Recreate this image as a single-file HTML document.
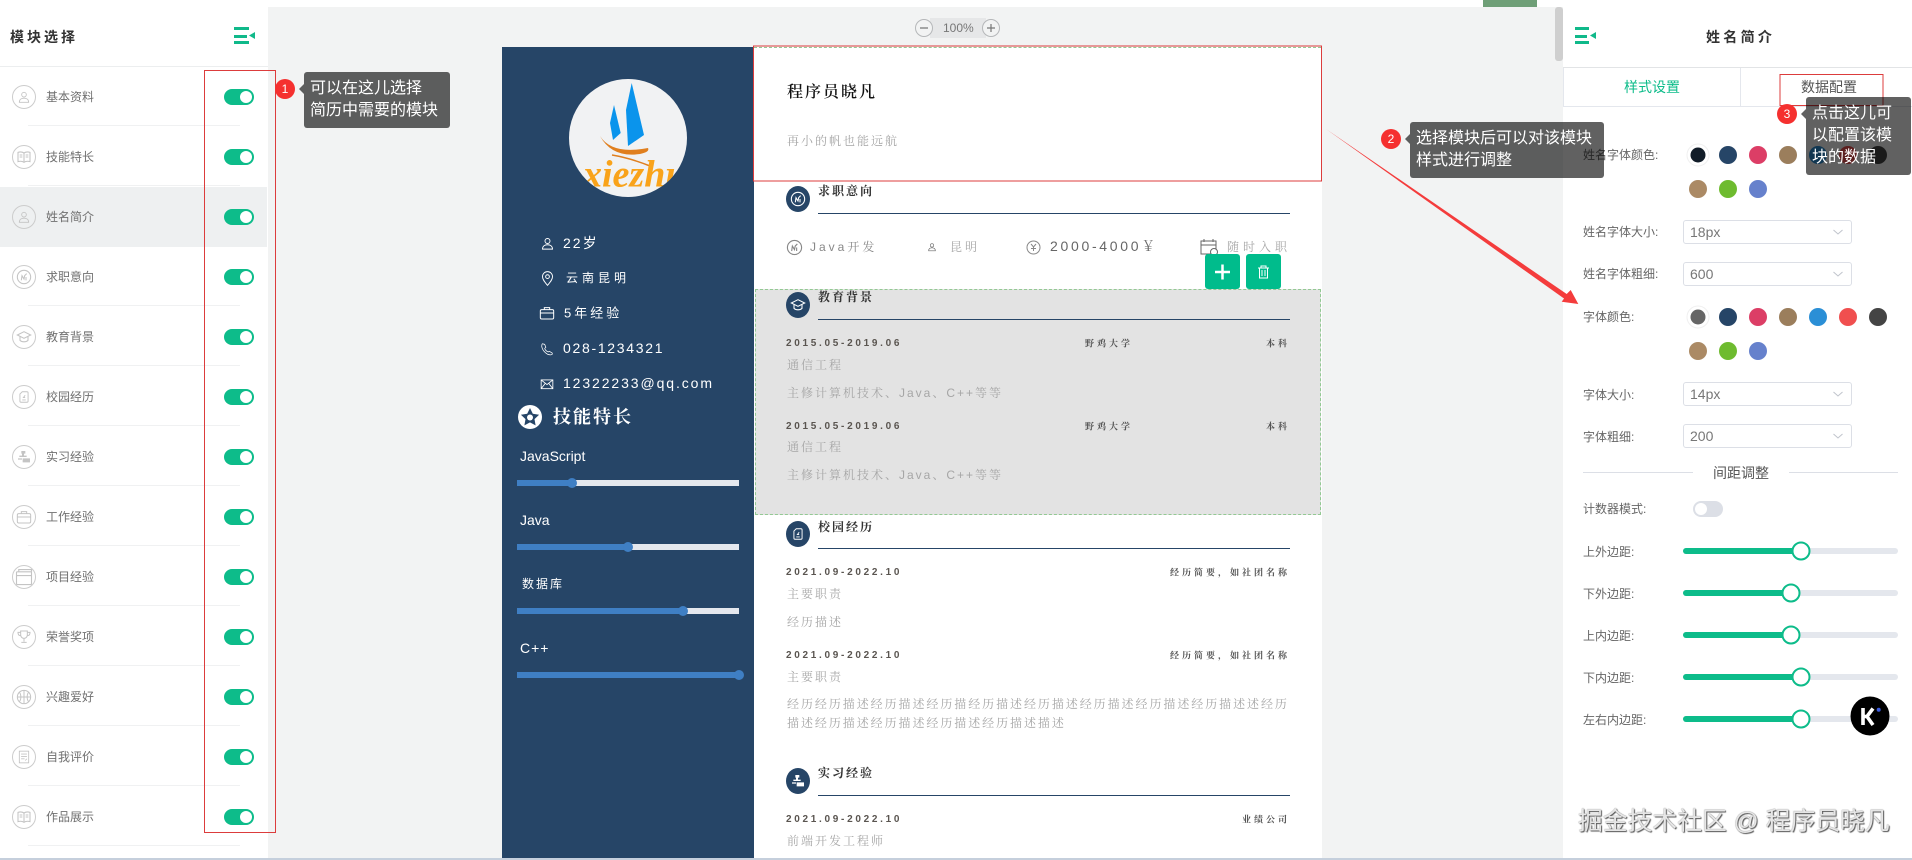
<!DOCTYPE html>
<html lang="zh-CN"><head><meta charset="utf-8"><title>简历编辑器</title>
<style>
html,body{margin:0;padding:0;width:1912px;height:860px;overflow:hidden;background:#fff}
body{position:relative;font-family:"Liberation Sans","Noto Sans CJK SC",sans-serif;color:#666}
.a{position:absolute}
.t{position:absolute;white-space:nowrap;line-height:1;transform:translateY(-50%)}
svg.l{position:absolute;left:0;top:0}
.m{font-size:12px;color:#707070;left:46px}
.r{font-family:"Liberation Sans","Noto Serif CJK SC",serif;font-size:12px;letter-spacing:2px;color:#a6a6a6;left:787px}
.h{font-family:"Liberation Sans","Noto Serif CJK SC",serif;font-size:12px;letter-spacing:2px;color:#333;font-weight:700;left:818px}
.d{font-size:10px;font-weight:700;letter-spacing:2.7px;color:#5a5550;left:786px}
.s{font-family:"Liberation Sans","Noto Serif CJK SC",serif;font-size:9px;font-weight:700;letter-spacing:3px;color:#555}
.i{color:#fff;font-size:14px;left:563px}
.c{font-size:12px;color:#666;left:1583px}
.sel{position:absolute;left:1683px;width:167px;height:22px;border:1px solid #dcdfe6;border-radius:3px;background:#fff;box-sizing:content-box}
.sel span{position:absolute;left:6px;top:3px;font-size:14px;line-height:16px;color:#777}
.tip{position:absolute;background:rgba(0,0,0,.62);border-radius:3px;color:#fff;font-size:16px;line-height:22px;box-sizing:border-box;white-space:nowrap}
.tip:before{content:"";position:absolute;left:-5px;top:12px;border:5px solid transparent;border-left:0;border-right-color:rgba(0,0,0,.62)}
.b{position:absolute;border-radius:50%;background:#f5302f;color:#fff;font-size:12px;text-align:center}
</style></head><body>

<!-- backgrounds -->
<div class="a" style="left:268px;top:7px;width:1295px;height:851px;background:#f2f3f3"></div>
<div class="a" style="left:1483px;top:0;width:54px;height:7px;background:#6f9f77"></div>
<div class="a" style="left:1555px;top:7px;width:8px;height:54px;background:#cfcfcf;border-radius:3px"></div>
<div class="a" style="left:0;top:66px;width:268px;height:1px;background:#eceeef"></div>
<div class="a" style="left:0;top:187px;width:267px;height:60px;background:#eef0f1"></div>
<div class="a" style="left:502px;top:47px;width:252px;height:811px;background:#264567"></div>
<div class="a" style="left:754px;top:47px;width:568px;height:811px;background:#fff"></div>
<div class="a" style="left:755px;top:289px;width:566px;height:226px;background:#e3e3e3;border:1px dashed #93c993;box-sizing:border-box"></div>
<div class="a" style="left:754px;top:47px;width:567px;height:134px;border-top:1px dashed #93c993;box-sizing:border-box"></div>
<div class="a" style="left:930px;top:18px;width:56px;height:20px;background:#e6e7e8"></div>
<div class="a" style="left:1563px;top:67px;width:349px;height:1px;background:#e2e4e6"></div>
<div class="a" style="left:1563px;top:106px;width:349px;height:1px;background:#e4e7ed"></div>
<div class="a" style="left:1740px;top:68px;width:1px;height:38px;background:#e4e7ed"></div>
<div class="a" style="left:1563px;top:68px;width:1px;height:38px;background:#e4e7ed"></div>
<div class="a" style="left:0;top:858px;width:1912px;height:2px;background:#c5cfdc"></div>

<svg class="l" width="1912" height="860" viewBox="0 0 1912 860">
<defs>
<symbol id="u" viewBox="0 0 24 24"><g fill="none" stroke="currentColor" stroke-width="1.5"><circle cx="12" cy="8" r="4"/><path d="M4 21c0-5 4-7 8-7s8 2 8 7z"/></g></symbol>
<symbol id="bk" viewBox="0 0 24 24"><g fill="none" stroke="currentColor" stroke-width="1.6"><path d="M12 6C9 4 6 4 3 5v14c3-1 6-1 9 1 3-2 6-2 9-1V5c-3-1-6-1-9 1zM12 6v14M5.500 9h4M5.500 12h4M14.500 9h4M14.500 12h4"/></g></symbol>
<symbol id="ch" viewBox="0 0 24 24"><g fill="none" stroke="currentColor" stroke-width="1.6"><circle cx="12" cy="12" r="10"/><path d="M8 17l1-7 3 5 1-5 3-3M15 12v5"/></g></symbol>
<symbol id="ca" viewBox="0 0 24 24"><g fill="none" stroke="currentColor" stroke-width="1.6"><path d="M12 4L2 9l10 5 10-5zM6 11.500V17c3 3 9 3 12 0v-5.500"/></g></symbol>
<symbol id="dc" viewBox="0 0 24 24"><g fill="none" stroke="currentColor" stroke-width="1.6"><path d="M9 3h8a2 2 0 0 1 2 2v14a2 2 0 0 1-2 2H7a2 2 0 0 1-2-2V7zM9 17h6M14 9l-3 4h3"/></g></symbol>
<symbol id="st" viewBox="0 0 24 24"><path fill="currentColor" d="M8 3h6v4h-2v3h4v2H5v-2h4V7H8zM10 14h11v6H10zM3 14h6v2H3z"/></symbol>
<symbol id="br" viewBox="0 0 24 24"><g fill="none" stroke="currentColor" stroke-width="1.500"><rect x="2" y="7" width="20" height="14" rx="2"/><path d="M8 7V4h8v3M2 12h20"/></g></symbol>
<symbol id="wi" viewBox="0 0 24 24"><g fill="none" stroke="currentColor" stroke-width="1.500"><rect x="2" y="5" width="20" height="17" rx="1"/><path d="M2 10h20M5 5V2h17v3"/></g></symbol>
<symbol id="tr" viewBox="0 0 24 24"><g fill="none" stroke="currentColor" stroke-width="1.500"><path d="M7 3h10v6a5 5 0 0 1-10 0zM7 5H3c0 4 2 5 4 5M17 5h4c0 4-2 5-4 5M12 14v5M8 20h8"/></g></symbol>
<symbol id="ba" viewBox="0 0 24 24"><g fill="none" stroke="currentColor" stroke-width="1.500"><circle cx="12" cy="12" r="10"/><path d="M2 12h20M12 2v20M5 5c3 3 3 11 0 14M19 5c-3 3-3 11 0 14"/></g></symbol>
<symbol id="no" viewBox="0 0 24 24"><g fill="none" stroke="currentColor" stroke-width="1.500"><rect x="4" y="2" width="16" height="20"/><path d="M7 7h10M7 11h10M7 15h6M14 18l3-3"/></g></symbol>
<symbol id="pi" viewBox="0 0 24 24"><g fill="none" stroke="currentColor" stroke-width="1.500"><path d="M12 23C8 18 4 14 4 9a8 8 0 0 1 16 0c0 5-4 9-8 14z"/><circle cx="12" cy="9" r="3"/></g></symbol>
<symbol id="ph" viewBox="0 0 24 24"><g fill="none" stroke="currentColor" stroke-width="1.300"><path d="M4 3l4 1 2 5-2 2c1 3 3 5 6 6l2-1 5 3 0 2c-2 2-5 1-8 0-5-3-9-8-10-13 0-2 0-4 1-5z"/></g></symbol>
<symbol id="ma" viewBox="0 0 24 24"><g fill="none" stroke="currentColor" stroke-width="1.500"><rect x="2" y="5" width="20" height="15"/><path d="M2 5l10 8 10-8M2 20l7-9M22 20l-7-9"/></g></symbol>
<clipPath id="av"><circle cx="628" cy="138" r="59"/></clipPath>
</defs>

<!-- module icons -->
<g fill="none" stroke="#ccc" stroke-width="1">
<circle cx="24" cy="97" r="11.5"/><circle cx="24" cy="157" r="11.5"/><circle cx="24" cy="217" r="11.5"/><circle cx="24" cy="277" r="11.5"/><circle cx="24" cy="337" r="11.5"/><circle cx="24" cy="397" r="11.5"/><circle cx="24" cy="457" r="11.5"/><circle cx="24" cy="517" r="11.5"/><circle cx="24" cy="577" r="11.5"/><circle cx="24" cy="637" r="11.5"/><circle cx="24" cy="697" r="11.5"/><circle cx="24" cy="757" r="11.5"/><circle cx="24" cy="817" r="11.5"/>
</g>
<g style="color:#c4c4c4">
<use href="#u" x="17" y="90" width="14" height="14"/><use href="#bk" x="16" y="149" width="16" height="16"/><use href="#u" x="17" y="210" width="14" height="14"/><use href="#ch" x="16" y="269" width="16" height="16"/><use href="#ca" x="16" y="329" width="16" height="16"/><use href="#dc" x="17" y="390" width="14" height="14"/><use href="#st" x="16" y="449" width="16" height="16"/><use href="#br" x="16" y="509" width="16" height="16"/><use href="#wi" x="15" y="568" width="18" height="18"/><use href="#tr" x="16" y="629" width="16" height="16"/><use href="#ba" x="16" y="689" width="16" height="16"/><use href="#no" x="17" y="750" width="14" height="14"/><use href="#bk" x="16" y="809" width="16" height="16"/>
</g>
<!-- separators -->
<g stroke="#f0f1f2" stroke-width="1">
<path d="M28 125.500H240M28 185.500H240M28 305.500H240M28 365.500H240M28 425.500H240M28 485.500H240M28 545.500H240M28 605.500H240M28 665.500H240M28 725.500H240M28 785.500H240M28 845.500H240"/>
</g>
<!-- switches -->
<g fill="#0dbc8a">
<rect x="224" y="89" width="30" height="16" rx="8"/><rect x="224" y="149" width="30" height="16" rx="8"/><rect x="224" y="209" width="30" height="16" rx="8"/><rect x="224" y="269" width="30" height="16" rx="8"/><rect x="224" y="329" width="30" height="16" rx="8"/><rect x="224" y="389" width="30" height="16" rx="8"/><rect x="224" y="449" width="30" height="16" rx="8"/><rect x="224" y="509" width="30" height="16" rx="8"/><rect x="224" y="569" width="30" height="16" rx="8"/><rect x="224" y="629" width="30" height="16" rx="8"/><rect x="224" y="689" width="30" height="16" rx="8"/><rect x="224" y="749" width="30" height="16" rx="8"/><rect x="224" y="809" width="30" height="16" rx="8"/>
</g>
<g fill="#fff">
<circle cx="246" cy="97" r="6"/><circle cx="246" cy="157" r="6"/><circle cx="246" cy="217" r="6"/><circle cx="246" cy="277" r="6"/><circle cx="246" cy="337" r="6"/><circle cx="246" cy="397" r="6"/><circle cx="246" cy="457" r="6"/><circle cx="246" cy="517" r="6"/><circle cx="246" cy="577" r="6"/><circle cx="246" cy="637" r="6"/><circle cx="246" cy="697" r="6"/><circle cx="246" cy="757" r="6"/><circle cx="246" cy="817" r="6"/>
</g>
<!-- menu icons -->
<g fill="#10b98a">
<rect x="234" y="27" width="15" height="3"/><rect x="234" y="35" width="13" height="3"/><rect x="234" y="41" width="15" height="3"/><path d="M255 32v7l-6-3.500z"/>
<rect x="1575" y="27" width="14" height="3"/><rect x="1575" y="35" width="12" height="3"/><rect x="1575" y="41" width="14" height="3"/><path d="M1596 32v7l-6-3.500z"/>
</g>
<!-- zoom controls -->
<g fill="#f2f3f3" stroke="#b5b7b9"><circle cx="924" cy="28" r="8.500"/><circle cx="991" cy="28" r="8.500"/></g>
<path d="M920 28h8M987 28h8M991 24v8" stroke="#777" stroke-width="1.200"/>

<!-- avatar -->
<circle cx="628" cy="138" r="59" fill="#f1f2f3"/>
<g clip-path="url(#av)">
<path d="M631.700 83L644 135 628 146 626 110z" fill="#0a94ec"/>
<path d="M614 105L620.700 133 613 140 610 123z" fill="#0a94ec"/>
<path d="M600 136Q612 155 648 148 650 152 640 154 612 158 600 136z" fill="#e07f1e"/>
<path d="M612 155Q630 158 650 166" stroke="#e07f1e" stroke-width="1.500" fill="none"/>
<text x="583" y="186.500" font-family="Liberation Serif,serif" font-weight="700" font-style="italic" font-size="38" fill="#f9a31a">xiezhu</text>
</g>
<!-- sidebar icons -->
<g style="color:#fff">
<use href="#u" x="540" y="236" width="15" height="15"/><use href="#pi" x="540" y="271" width="15" height="15"/><use href="#br" x="539" y="305" width="16" height="16"/><use href="#ph" x="540" y="342" width="14" height="14"/><use href="#ma" x="540" y="377" width="14" height="14"/>
</g>
<circle cx="530" cy="417" r="12" fill="#fff"/>
<path d="M530 408l2.800 5.800 6.300.900-4.600 4.400 1.100 6.300-5.600-3-5.600 3 1.100-6.300-4.600-4.400 6.300-.900z" fill="#264567"/>
<circle cx="530" cy="417.500" r="3" fill="#fff"/>
<!-- skill bars -->
<g fill="#e4e7ed"><rect x="517" y="480" width="222" height="6"/><rect x="517" y="544" width="222" height="6"/><rect x="517" y="608" width="222" height="6"/></g>
<g fill="#3f7fc4">
<rect x="517" y="480" width="55" height="6"/><circle cx="572" cy="483" r="5"/>
<rect x="517" y="544" width="111" height="6"/><circle cx="628" cy="547" r="5"/>
<rect x="517" y="608" width="166" height="6"/><circle cx="683" cy="611" r="5"/>
<rect x="517" y="672" width="222" height="6"/><circle cx="739" cy="675" r="5"/>
</g>

<!-- resume section icons -->
<g fill="#264567">
<ellipse cx="798" cy="199" rx="12" ry="13"/><ellipse cx="798" cy="305" rx="12" ry="13"/><ellipse cx="798" cy="534" rx="12" ry="13"/><ellipse cx="798" cy="781" rx="12" ry="13"/>
</g>
<g style="color:#fff">
<use href="#ch" x="790" y="191" width="16" height="16"/><use href="#ca" x="790" y="297" width="16" height="16"/><use href="#dc" x="791" y="527" width="14" height="14"/><use href="#st" x="790" y="773" width="16" height="16"/>
</g>
<g stroke="#264567" stroke-width="1">
<path d="M818 213.500H1290M818 319.500H1290M818 548.500H1290M818 795.500H1290"/>
</g>
<!-- job row icons -->
<g style="color:#888">
<use href="#ch" x="786" y="239" width="17" height="17"/>
<use href="#u" x="927" y="240" width="10" height="14" style="color:#666"/>
<circle cx="1033.500" cy="247.500" r="6.500" fill="none" stroke="#888"/>
<path d="M1031 244l2.500 3 2.500-3M1033.500 247v4M1031 248.500h5" stroke="#888" fill="none"/>
<rect x="1201" y="241" width="15" height="13" fill="none" stroke="#666"/>
<path d="M1201 245h15M1204 239v3M1213 239v3" stroke="#666" fill="none"/>
<circle cx="1214" cy="252" r="3.500" fill="#fff" stroke="#666"/>
</g>
<!-- buttons -->
<rect x="1205" y="254" width="35" height="35" rx="3" fill="#00bc8c"/>
<rect x="1246" y="254" width="35" height="35" rx="3" fill="#00bc8c"/>
<path d="M1215 272h15M1222.500 264.500v15" stroke="#fff" stroke-width="2.500"/>
<path d="M1258 268h11M1261 268v-2h5v2M1259.500 268v10h8v-10M1262 270v6M1265 270v6" stroke="#fff" fill="none"/>

<!-- colour dots -->
<g>
<circle cx="1698" cy="155" r="11" fill="#fff" stroke="#f0f0f0"/><circle cx="1698" cy="155" r="7.500" fill="#111c28"/>
<circle cx="1728" cy="155" r="9" fill="#264567"/><circle cx="1758" cy="155" r="9" fill="#dc3e66"/><circle cx="1788" cy="155" r="9" fill="#9b7e5c"/><circle cx="1818" cy="155" r="9" fill="#2b8fd6"/><circle cx="1848" cy="155" r="9" fill="#f04f4f"/><circle cx="1878" cy="155" r="9" fill="#444"/>
<circle cx="1698" cy="189" r="9" fill="#ab8a65"/><circle cx="1728" cy="189" r="9" fill="#6ebb2f"/><circle cx="1758" cy="189" r="9" fill="#6681cc"/>
<circle cx="1698" cy="317" r="11" fill="#fff" stroke="#f0f0f0"/><circle cx="1698" cy="317" r="7.500" fill="#666"/>
<circle cx="1728" cy="317" r="9" fill="#264567"/><circle cx="1758" cy="317" r="9" fill="#dc3e66"/><circle cx="1788" cy="317" r="9" fill="#9b7e5c"/><circle cx="1818" cy="317" r="9" fill="#2b8fd6"/><circle cx="1848" cy="317" r="9" fill="#f04f4f"/><circle cx="1878" cy="317" r="9" fill="#444"/>
<circle cx="1698" cy="351" r="9" fill="#ab8a65"/><circle cx="1728" cy="351" r="9" fill="#6ebb2f"/><circle cx="1758" cy="351" r="9" fill="#6681cc"/>
</g>
<!-- divider -->
<path d="M1583 472.500H1693M1789 472.500H1898" stroke="#dcdfe6"/>
<!-- off switch -->
<rect x="1693" y="501" width="30" height="16" rx="8" fill="#dcdfe6"/><circle cx="1701" cy="509" r="6" fill="#fff"/>
<!-- sliders -->
<g fill="#e4e7ed"><rect x="1683" y="548" width="215" height="6" rx="3"/><rect x="1683" y="590" width="215" height="6" rx="3"/><rect x="1683" y="632" width="215" height="6" rx="3"/><rect x="1683" y="674" width="215" height="6" rx="3"/><rect x="1683" y="716" width="215" height="6" rx="3"/></g>
<g fill="#0dbc8a"><rect x="1683" y="548" width="118" height="6" rx="3"/><rect x="1683" y="590" width="108" height="6" rx="3"/><rect x="1683" y="632" width="108" height="6" rx="3"/><rect x="1683" y="674" width="118" height="6" rx="3"/><rect x="1683" y="716" width="118" height="6" rx="3"/></g>
<g fill="#fff" stroke="#0dbc8a" stroke-width="2"><circle cx="1801" cy="551" r="8.500"/><circle cx="1791" cy="593" r="8.500"/><circle cx="1791" cy="635" r="8.500"/><circle cx="1801" cy="677" r="8.500"/><circle cx="1801" cy="719" r="8.500"/></g>
<circle cx="1870" cy="716" r="19.500" fill="#000"/>
<path d="M1863 708v17M1863 716.500h4l6-8M1867 716.500l6 8.500" stroke="#fff" stroke-width="3.600" fill="none"/>
<circle cx="1878.700" cy="709.700" r="2" fill="#3b5bdb"/>
</svg>

<!-- left panel text -->
<div class="t" style="left:10px;top:37px;font-size:14px;font-weight:700;letter-spacing:3px;color:#333">模块选择</div>
<div class="t m" style="top:97px">基本资料</div>
<div class="t m" style="top:157px">技能特长</div>
<div class="t m" style="top:217px">姓名简介</div>
<div class="t m" style="top:277px">求职意向</div>
<div class="t m" style="top:337px">教育背景</div>
<div class="t m" style="top:397px">校园经历</div>
<div class="t m" style="top:457px">实习经验</div>
<div class="t m" style="top:517px">工作经验</div>
<div class="t m" style="top:577px">项目经验</div>
<div class="t m" style="top:637px">荣誉奖项</div>
<div class="t m" style="top:697px">兴趣爱好</div>
<div class="t m" style="top:757px">自我评价</div>
<div class="t m" style="top:817px">作品展示</div>

<!-- zoom -->
<div class="t" style="left:943px;top:28px;font-size:12px;color:#777">100%</div>

<!-- sidebar text -->
<div class="t i" style="top:243px;letter-spacing:2px">22岁</div>
<div class="t i" style="top:278px;left:566px;font-size:12px;letter-spacing:4px">云南昆明</div>
<div class="t i" style="top:313px;left:564px;font-size:13px;letter-spacing:3px">5年经验</div>
<div class="t i" style="top:348px;letter-spacing:1.700px">028-1234321</div>
<div class="t i" style="top:383px;letter-spacing:1.900px">12322233@qq.com</div>
<div class="t" style="left:553px;top:417px;font-size:18px;font-weight:700;letter-spacing:2px;color:#fff;font-family:'Liberation Sans','Noto Serif CJK SC',serif">技能特长</div>
<div class="t" style="left:520px;top:456px;font-size:14px;color:#fff">JavaScript</div>
<div class="t" style="left:520px;top:520px;font-size:14px;color:#fff">Java</div>
<div class="t" style="left:522px;top:584px;font-size:12px;letter-spacing:2px;color:#fff">数据库</div>
<div class="t" style="left:520px;top:648px;font-size:14px;letter-spacing:1px;color:#fff">C++</div>

<!-- resume main text -->
<div class="t" style="left:787px;top:93px;font-family:'Liberation Sans','Noto Serif CJK SC',serif;font-size:16px;font-weight:600;letter-spacing:2px;color:#111">程序员晓凡</div>
<div class="t r" style="top:141px">再小的帆也能远航</div>

<div class="t h" style="top:191px">求职意向</div>
<div class="t r" style="left:810px;top:247px;letter-spacing:3px;color:#888">Java开发</div>
<div class="t r" style="left:950px;top:247px;letter-spacing:3px">昆明</div>
<div class="t r" style="left:1050px;top:246px;font-size:14px;letter-spacing:2.700px;color:#666">2000-4000￥</div>
<div class="t r" style="left:1227px;top:247px;letter-spacing:4px">随时入职</div>

<div class="t h" style="top:297px">教育背景</div>
<div class="t d" style="top:344px">2015.05-2019.06</div>
<div class="t s" style="left:1085px;top:344px">野鸡大学</div>
<div class="t s" style="left:1266px;top:344px">本科</div>
<div class="t r" style="top:365px">通信工程</div>
<div class="t r" style="top:393px">主修计算机技术、Java、C++等等</div>
<div class="t d" style="top:427px">2015.05-2019.06</div>
<div class="t s" style="left:1085px;top:427px">野鸡大学</div>
<div class="t s" style="left:1266px;top:427px">本科</div>
<div class="t r" style="top:447px">通信工程</div>
<div class="t r" style="top:475px">主修计算机技术、Java、C++等等</div>

<div class="t h" style="top:527px">校园经历</div>
<div class="t d" style="top:573px">2021.09-2022.10</div>
<div class="t s" style="left:1170px;top:573px">经历简要，如社团名称</div>
<div class="t r" style="top:594px">主要职责</div>
<div class="t r" style="top:622px">经历描述</div>
<div class="t d" style="top:656px">2021.09-2022.10</div>
<div class="t s" style="left:1170px;top:656px">经历简要，如社团名称</div>
<div class="t r" style="top:677px">主要职责</div>
<div class="t r" style="top:704px;letter-spacing:1.940px">经历经历描述经历描述经历描经历描述经历描述经历描述经历描述经历描述述经历</div>
<div class="t r" style="top:723px;letter-spacing:1.940px">描述经历描述经历描述经历描述经历描述描述</div>

<div class="t h" style="top:773px">实习经验</div>
<div class="t d" style="top:820px">2021.09-2022.10</div>
<div class="t s" style="left:1242px;top:820px">业绩公司</div>
<div class="t r" style="top:841px">前端开发工程师</div>

<!-- right panel text -->
<div class="t" style="left:1706px;top:37px;font-size:14px;font-weight:700;letter-spacing:3.300px;color:#333">姓名简介</div>
<div class="t" style="left:1624px;top:87px;font-size:14px;color:#0dbc8a">样式设置</div>
<div class="t" style="left:1801px;top:87px;font-size:14px;color:#555">数据配置</div>
<div class="t c" style="top:155px">姓名字体颜色:</div>
<div class="t c" style="top:232px">姓名字体大小:</div>
<div class="sel" style="top:220px"><span>18px</span></div>
<div class="t c" style="top:274px">姓名字体粗细:</div>
<div class="sel" style="top:262px"><span>600</span></div>
<div class="t c" style="top:317px">字体颜色:</div>
<div class="t c" style="top:395px">字体大小:</div>
<div class="sel" style="top:382px"><span>14px</span></div>
<div class="t c" style="top:437px">字体粗细:</div>
<div class="sel" style="top:424px"><span>200</span></div>
<svg class="l" width="1912" height="860" viewBox="0 0 1912 860" style="pointer-events:none"><path d="M1833.500 230l4.500 4 4.500-4M1833.500 272l4.500 4 4.500-4M1833.500 392l4.500 4 4.500-4M1833.500 434l4.500 4 4.500-4" fill="none" stroke="#c0c4cc"/></svg>
<div class="t" style="left:1713px;top:473px;font-size:14px;color:#555">间距调整</div>
<div class="t c" style="top:509px">计数器模式:</div>
<div class="t c" style="top:552px">上外边距:</div>
<div class="t c" style="top:594px">下外边距:</div>
<div class="t c" style="top:636px">上内边距:</div>
<div class="t c" style="top:678px">下内边距:</div>
<div class="t c" style="top:720px">左右内边距:</div>
<div class="t" style="left:1578px;top:823px;font-size:24.800px;color:#e6e6e6;text-shadow:1px 1px 1px #555,0 0 1px #666">掘金技术社区 @ 程序员晓凡</div>

<!-- annotations -->
<svg class="l" width="1912" height="860" viewBox="0 0 1912 860">
<g fill="none" stroke="#dc3c3c" stroke-width="1">
<rect x="204.500" y="70.500" width="71" height="762"/>
<rect x="753.500" y="46" width="568" height="135"/>
<rect x="1780" y="74.500" width="103" height="31"/>
</g>
<path d="M1326 129L1566.700 294 1570.700 290 1578.300 304 1561.700 301.700 1564 298.500z" fill="#f43c3c"/>
</svg>
<div class="b" style="left:275px;top:79px;width:20px;height:20px;line-height:20px">1</div>
<div class="tip" style="left:304px;top:72px;width:146px;height:56px;padding:6px 0 0 6px">可以在这儿选择<br>简历中需要的模块</div>
<div class="b" style="left:1381px;top:129px;width:20px;height:20px;line-height:20px">2</div>
<div class="tip" style="left:1410px;top:122px;width:194px;height:56px;padding:6px 0 0 6px">选择模块后可以对该模块<br>样式进行调整</div>
<div class="b" style="left:1777px;top:104px;width:20px;height:20px;line-height:20px">3</div>
<div class="tip" style="left:1806px;top:97px;width:105px;height:78px;padding:6px 0 0 6px">点击这儿可<br>以配置该模<br>块的数据</div>
</body></html>
